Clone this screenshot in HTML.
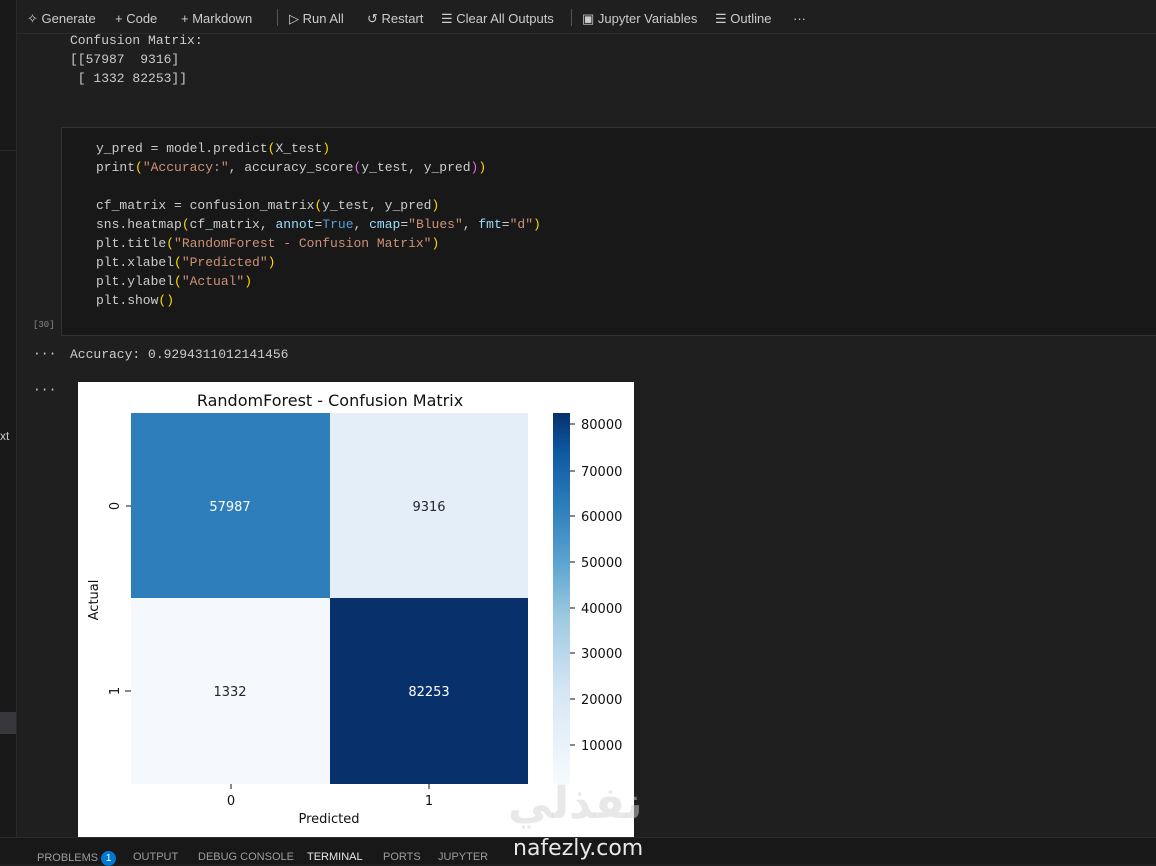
<!DOCTYPE html>
<html><head><meta charset="utf-8"><style>
body{margin:0;width:1156px;height:863px;background:#1f1f1f;overflow:hidden;position:relative;font-family:"Liberation Sans",sans-serif;color:#ccc}
.side{position:absolute;left:0;top:0;width:16px;height:837px;background:#181818;border-right:1px solid #2b2b2b}
.tb{position:absolute;left:17px;top:0;right:0;height:33px;border-bottom:1px solid #2b2b2b;font-size:13px;color:#ccc}
.tb span{position:absolute;top:11px;white-space:nowrap}
.sep{position:absolute;top:9px;width:1px;height:17px;background:#555}
.mono{font-family:"Liberation Mono",monospace;font-size:13px;white-space:pre;position:absolute;line-height:19px}
.cell{position:absolute;left:61px;top:127px;right:-2px;height:207px;background:#181818;border:1px solid #333}
.bp{position:absolute;left:0;top:837px;width:1156px;height:26px;background:#181818;border-top:1px solid #2b2b2b;font-size:11px;color:#9d9d9d}
.bp span{position:absolute;top:13px}
.y{color:#ffd700}.s{color:#ce9178}.b{color:#9cdcfe}.k{color:#569cd6}.p{color:#da70d6}.f{color:#dcdcaa}
</style></head><body>
<div class="side"></div>
<div style="position:absolute;left:0;top:150px;width:16px;height:1px;background:#2b2b2b"></div>
<div style="position:absolute;left:0;top:712px;width:16px;height:22px;background:#37373d"></div>
<div style="position:absolute;left:0;top:429px;font-size:12px;color:#ccc">xt</div>
<div class="tb">
<span style="left:10px">✧ Generate</span>
<span style="left:98px">+ Code</span>
<span style="left:164px">+ Markdown</span>
<div class="sep" style="left:260px"></div>
<span style="left:272px">▷ Run All</span>
<span style="left:350px">↺ Restart</span>
<span style="left:424px">☰ Clear All Outputs</span>
<div class="sep" style="left:554px"></div>
<span style="left:565px">▣ Jupyter Variables</span>
<span style="left:698px">☰ Outline</span>
<span style="left:776px">···</span>
</div>
<div class="mono" style="left:70px;top:31px;color:#ccc">Confusion Matrix:
[[57987  9316]
 [ 1332 82253]]</div>
<div class="cell"></div>
<div class="mono" style="left:96px;top:139px;color:#ccc">y_pred = model.predict<span class="y">(</span>X_test<span class="y">)</span>
print<span class="y">(</span><span class="s">"Accuracy:"</span>, accuracy_score<span class="p">(</span>y_test, y_pred<span class="p">)</span><span class="y">)</span>

cf_matrix = confusion_matrix<span class="y">(</span>y_test, y_pred<span class="y">)</span>
sns.heatmap<span class="y">(</span>cf_matrix, <span class="b">annot</span>=<span class="k">True</span>, <span class="b">cmap</span>=<span class="s">"Blues"</span>, <span class="b">fmt</span>=<span class="s">"d"</span><span class="y">)</span>
plt.title<span class="y">(</span><span class="s">"RandomForest - Confusion Matrix"</span><span class="y">)</span>
plt.xlabel<span class="y">(</span><span class="s">"Predicted"</span><span class="y">)</span>
plt.ylabel<span class="y">(</span><span class="s">"Actual"</span><span class="y">)</span>
plt.show<span class="y">()</span></div>
<div class="mono" style="left:33px;top:316px;font-size:9px;color:#888">[30]</div>
<div class="mono" style="left:33px;top:344px;color:#ccc">···</div>
<div class="mono" style="left:70px;top:345px;color:#ccc">Accuracy: 0.9294311012141456</div>
<div class="mono" style="left:33px;top:380px;color:#ccc">···</div>
<svg style="position:absolute;left:78px;top:382px" width="556" height="455" font-family="DejaVu Sans, sans-serif">
<defs><linearGradient id="g" x1="0" y1="1" x2="0" y2="0">
<stop offset="0" stop-color="#f7fbff"/><stop offset="0.25" stop-color="#d6e6f4"/><stop offset="0.45" stop-color="#9dc9e1"/><stop offset="0.6" stop-color="#5ba3d0"/><stop offset="0.75" stop-color="#2d7dbb"/><stop offset="0.9" stop-color="#0d57a1"/><stop offset="1" stop-color="#08306b"/></linearGradient></defs>
<rect width="556" height="455" fill="#fff"/>
<text x="252" y="24" font-size="16" text-anchor="middle" fill="#111">RandomForest - Confusion Matrix</text>
<rect x="53" y="31" width="199" height="185" fill="#2f7ebc"/>
<rect x="252" y="31" width="198" height="185" fill="#e3eef9"/>
<rect x="53" y="216" width="199" height="186" fill="#f5f9fe"/>
<rect x="252" y="216" width="198" height="186" fill="#08306b"/>
<g font-size="13" text-anchor="middle">
<text x="152" y="129" fill="#fff">57987</text>
<text x="351" y="129" fill="#262626">9316</text>
<text x="152" y="314" fill="#262626">1332</text>
<text x="351" y="314" fill="#fff">82253</text>
<text x="153" y="423" fill="#111">0</text>
<text x="351" y="423" fill="#111">1</text>
<text x="251" y="441" fill="#111">Predicted</text>
</g>
<g stroke="#111"><line x1="153" y1="402" x2="153" y2="407"/><line x1="351" y1="402" x2="351" y2="407"/><line x1="48" y1="124" x2="53" y2="124"/><line x1="47" y1="309" x2="53" y2="309"/></g>
<text transform="translate(41,124) rotate(-90)" font-size="13" text-anchor="middle" fill="#111">0</text>
<text transform="translate(41,309) rotate(-90)" font-size="13" text-anchor="middle" fill="#111">1</text>
<text transform="translate(20,218) rotate(-90)" font-size="13" text-anchor="middle" fill="#111">Actual</text>
<rect x="475" y="31" width="17" height="371" fill="url(#g)"/>
<g font-size="13" fill="#111">
<text x="503" y="47">80000</text><text x="503" y="94">70000</text><text x="503" y="139">60000</text><text x="503" y="185">50000</text><text x="503" y="231">40000</text><text x="503" y="276">30000</text><text x="503" y="322">20000</text><text x="503" y="368">10000</text>
</g>
<g stroke="#111"><line x1="492" y1="42" x2="497" y2="42"/><line x1="492" y1="89" x2="497" y2="89"/><line x1="492" y1="134" x2="497" y2="134"/><line x1="492" y1="180" x2="497" y2="180"/><line x1="492" y1="226" x2="497" y2="226"/><line x1="492" y1="271" x2="497" y2="271"/><line x1="492" y1="317" x2="497" y2="317"/><line x1="492" y1="363" x2="497" y2="363"/></g>
</svg>
<div style="position:absolute;left:508px;top:778px;font-size:44px;font-weight:bold;color:rgba(210,210,210,0.5);font-family:'DejaVu Sans',sans-serif">نفذلي</div>
<div class="bp">
<span style="left:37px">PROBLEMS <b style="display:inline-block;width:15px;height:15px;border-radius:8px;background:#0078d4;color:#fff;text-align:center;font-size:10px;line-height:15px;font-weight:normal">1</b></span>
<span style="left:133px">OUTPUT</span>
<span style="left:198px">DEBUG CONSOLE</span>
<span style="left:307px;color:#e7e7e7">TERMINAL</span>
<span style="left:383px">PORTS</span>
<span style="left:438px">JUPYTER</span>
</div>
<div style="position:absolute;left:513px;top:836px;font-size:22px;color:#e8e8e8;font-family:'DejaVu Sans',sans-serif">nafezly.com</div>
</body></html>
